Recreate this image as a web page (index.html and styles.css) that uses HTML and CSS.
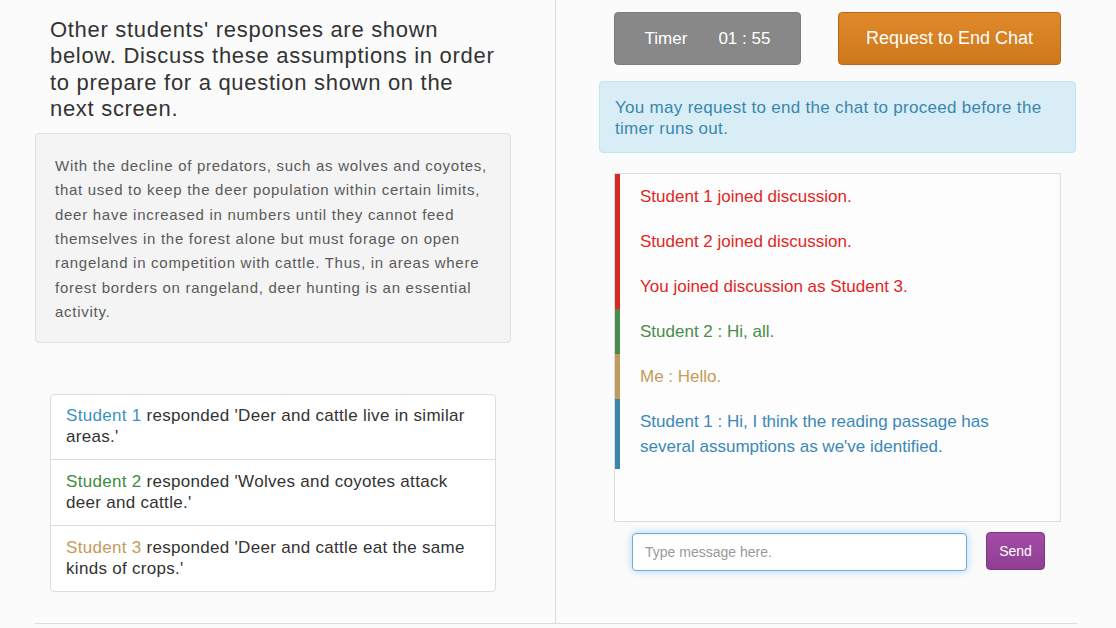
FILE: index.html
```html
<!DOCTYPE html>
<html>
<head>
<meta charset="utf-8">
<link rel="stylesheet" href="styles.css">
</head>
<body>
<div class="page">
  <div class="left">
    <h2 class="prompt">Other students' responses are shown below. Discuss these assumptions in order to prepare for a question shown on the next screen.</h2>
    <div class="well">With the decline of predators, such as wolves and coyotes, that used to keep the deer population within certain limits, deer have increased in numbers until they cannot feed themselves in the forest alone but must forage on open rangeland in competition with cattle. Thus, in areas where forest borders on rangeland, deer hunting is an essential activity.</div>
    <ul class="responses">
      <li class="response"><span class="s1">Student 1</span> responded 'Deer and cattle live in similar areas.'</li>
      <li class="response"><span class="s2">Student 2</span> responded 'Wolves and coyotes attack deer and cattle.'</li>
      <li class="response"><span class="s3">Student 3</span> responded 'Deer and cattle eat the same kinds of crops.'</li>
    </ul>
  </div>
  <div class="right">
    <div class="top-row">
      <div class="timer"><span>Timer</span><span class="time">01 : 55</span></div>
      <button class="end-btn">Request to End Chat</button>
    </div>
    <div class="alert">You may request to end the chat to proceed before the timer runs out.</div>
    <div class="chat">
      <div class="msg sys">Student 1 joined discussion.</div>
      <div class="msg sys">Student 2 joined discussion.</div>
      <div class="msg sys">You joined discussion as Student 3.</div>
      <div class="msg m2">Student 2 : Hi, all.</div>
      <div class="msg me">Me : Hello.</div>
      <div class="msg m1">Student 1 : Hi, I think the reading passage has several assumptions as we've identified.</div>
    </div>
    <div class="composer">
      <input class="msg-input" type="text" placeholder="Type message here." autofocus>
      <button class="send-btn">Send</button>
    </div>
  </div>
</div>
</body>
</html>
```

FILE: styles.css
```css
* { box-sizing: border-box; }
html, body { margin: 0; padding: 0; }
body {
  background: #fbfbfb;
  font-family: "Liberation Sans", Arial, sans-serif;
  color: #333;
}
.page {
  margin-left: 35px;
  width: 1042px;
  height: 624px;
  display: flex;
  border-bottom: 1px solid #dcdcdc;
}
.left {
  width: 521px;
  border-right: 1px solid #dcdcdc;
  padding-right: 44px;
}
.prompt {
  margin: 17px 0 0;
  padding: 0 15px;
  font-size: 22px;
  line-height: 26.3px;
  letter-spacing: 0.7px;
  font-weight: normal;
  color: #333;
}
.well {
  margin-top: 11px;
  background: #f4f4f4;
  border: 1px solid #e1e1e1;
  border-radius: 4px;
  padding: 20px 19px 18px;
  font-size: 15px;
  line-height: 24.3px;
  letter-spacing: 0.72px;
  color: #5a5a5a;
}
.responses {
  list-style: none;
  margin: 51px 15px 0;
  padding: 0;
  border: 1px solid #dddddd;
  border-radius: 4px;
  background: #fff;
}
.response {
  padding: 11px 15px 12px;
  font-size: 17px;
  line-height: 21px;
  letter-spacing: 0.3px;
  color: #333;
  border-top: 1px solid #dddddd;
}
.response:first-child { border-top: none; padding-top: 10px; }
.s1 { color: #3b92c2; }
.s2 { color: #3d8b3d; }
.s3 { color: #c59a5c; }

.right {
  flex: 1;
  padding: 12px 1px 0 43px;
}
.top-row {
  display: flex;
  justify-content: space-between;
  margin: 0 15px;
}
.timer {
  width: 187px;
  height: 53px;
  background: #888888;
  border: 1px solid #7d7d7d;
  border-radius: 4px;
  color: #fff;
  font-size: 17px;
  display: flex;
  align-items: center;
  justify-content: center;
}
.time { margin-left: 31px; }
.end-btn {
  width: 223px;
  height: 53px;
  background: linear-gradient(#e0892a, #cd781b);
  border: 1px solid #b86b17;
  border-radius: 4px;
  color: #fff;
  font-family: "Liberation Sans", Arial, sans-serif;
  font-size: 18px;
  padding: 0;
}
.alert {
  margin-top: 16px;
  background: #d9edf7;
  border: 1px solid #bce8f1;
  border-radius: 4px;
  color: #3a87ad;
  font-size: 17px;
  line-height: 21px;
  letter-spacing: 0.3px;
  padding: 15px 15px 13px;
}
.chat {
  margin: 20px 15px 0;
  height: 349px;
  border: 1px solid #dcdcdc;
  background: #fdfdfd;
}
.msg {
  border-left: 5px solid;
  padding: 10px 20px;
  font-size: 17px;
  line-height: 25px;
}
.sys { color: #e2261d; border-left-color: #d52b1e; }
.m2 { color: #4a8c4a; border-left-color: #4a8a4c; }
.me { color: #c69a5a; border-left-color: #c29a5c; }
.m1 { color: #3a88b8; border-left-color: #3a86ad; }
.composer {
  display: flex;
  align-items: flex-start;
  margin: 10px 0 0 33px;
}
.msg-input {
  margin-top: 1px;
  width: 335px;
  height: 38px;
  border: 1px solid #66afe9;
  border-radius: 4px;
  box-shadow: inset 0 1px 1px rgba(0,0,0,.075), 0 0 8px rgba(102,175,233,.5);
  outline: none;
  background: #fff;
  padding: 6px 12px;
  font-family: "Liberation Sans", Arial, sans-serif;
  font-size: 14px;
  color: #555;
}
.msg-input::placeholder { color: #999; }
.send-btn {
  margin-left: 19px;
  width: 59px;
  height: 38px;
  background: linear-gradient(#a34ca5, #8f3f93);
  border: 1px solid #7c3780;
  border-radius: 4px;
  color: #fff;
  font-family: "Liberation Sans", Arial, sans-serif;
  font-size: 14px;
  padding: 0;
}
```
